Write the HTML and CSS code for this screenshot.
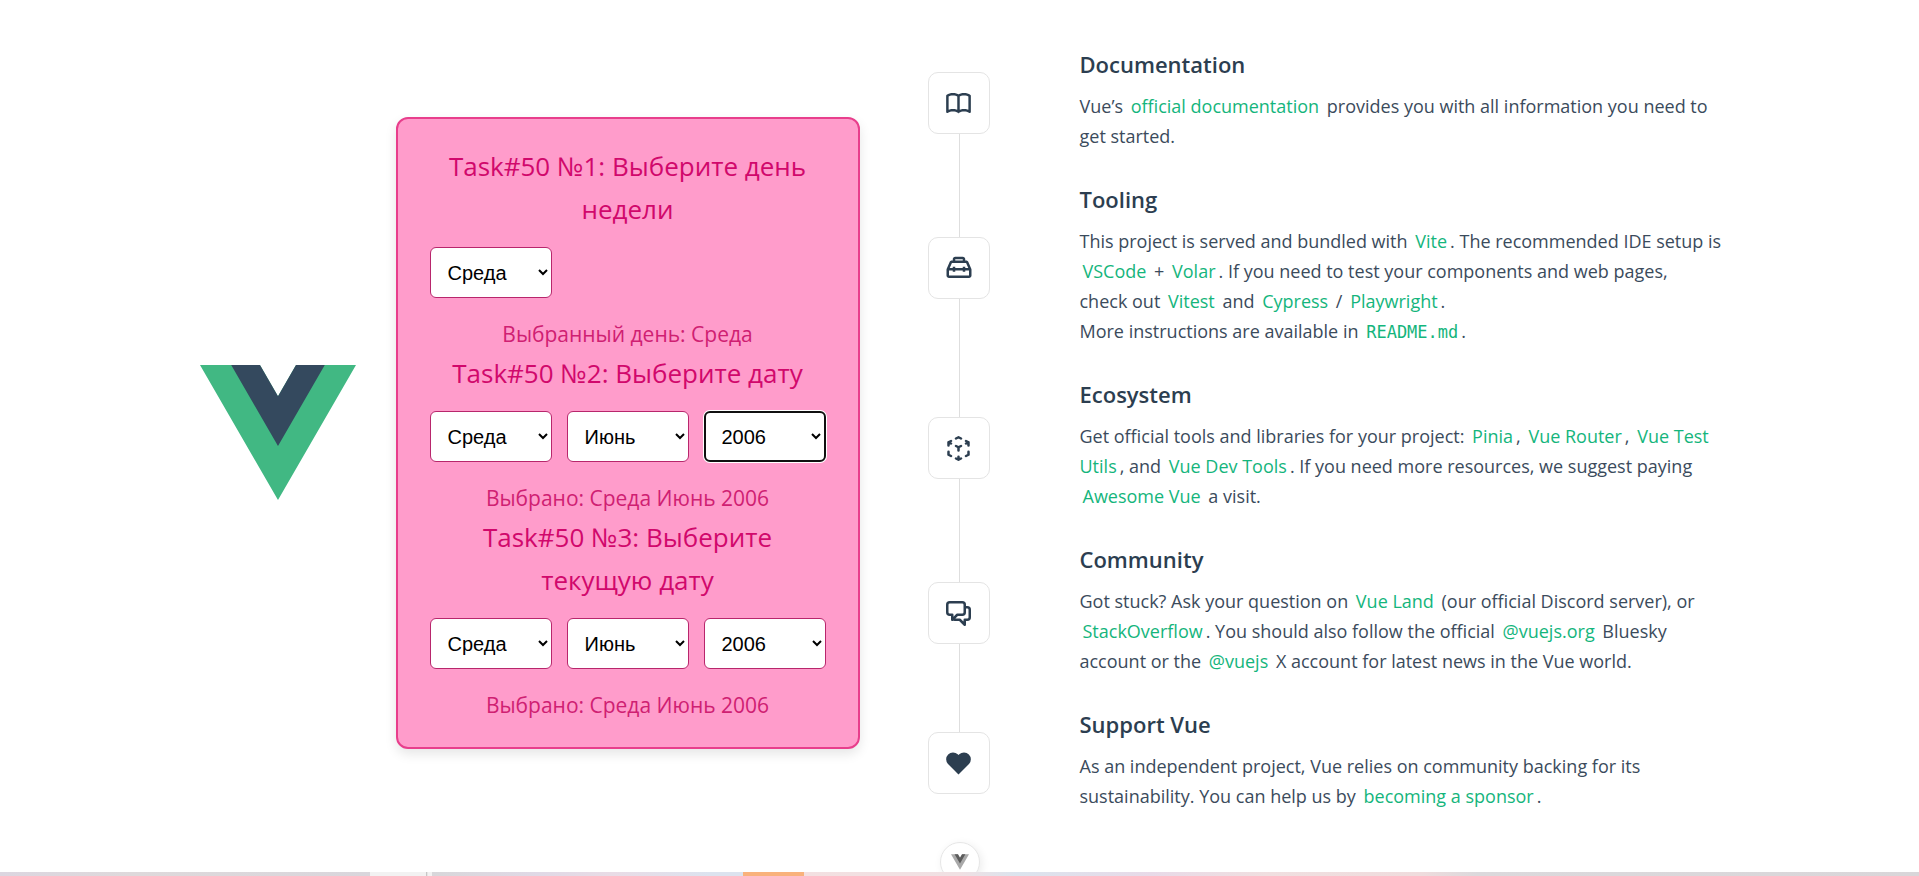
FILE: index.html
```html
<!DOCTYPE html>
<html lang="ru">
<head>
<meta charset="utf-8">
<meta name="viewport" content="width=device-width, initial-scale=1">
<title>Vue App</title>
<link rel="stylesheet" href="styles.css">
</head>
<body>
<div class="app">
  <header class="header">
    <svg class="logo" viewBox="0 0 261.76 226.69" role="img" aria-label="Vue logo">
      <path fill="#41b883" d="M161.096.001l-30.224 52.35L100.647.002H-.005L130.872 226.69 261.749 0z"/>
      <path fill="#34495e" d="M161.096.001l-30.224 52.35L100.647.002H52.346l78.526 136.01L209.398.001z"/>
    </svg>
    <div class="card">
      <h2 class="card-title">Task#50 №1: Выберите день недели</h2>
      <div class="selects">
        <select class="select" aria-label="День недели"><option>Среда</option></select>
      </div>
      <p class="result">Выбранный день: Среда</p>
      <h2 class="card-title">Task#50 №2: Выберите дату</h2>
      <div class="selects">
        <select class="select" aria-label="День"><option>Среда</option></select>
        <select class="select" aria-label="Месяц"><option>Июнь</option></select>
        <select class="select select-active" aria-label="Год"><option>2006</option></select>
      </div>
      <p class="result">Выбрано: Среда Июнь 2006</p>
      <h2 class="card-title">Task#50 №3: Выберите текущую дату</h2>
      <div class="selects">
        <select class="select" aria-label="Текущий день"><option>Среда</option></select>
        <select class="select" aria-label="Текущий месяц"><option>Июнь</option></select>
        <select class="select" aria-label="Текущий год"><option>2006</option></select>
      </div>
      <p class="result">Выбрано: Среда Июнь 2006</p>
    </div>
  </header>

  <main class="items" lang="en">
    <section class="item">
      <div class="rail"><span class="icon">
        <svg width="25" height="21" viewBox="0 0 20 17" fill="currentColor" aria-hidden="true"><path d="M11 2.253a1 1 0 1 0-2 0h2zm-2 13a1 1 0 1 0 2 0H9zm.447-12.167a1 1 0 1 0 1.107-1.666L9.447 3.086zM1 2.253L.447 1.42A1 1 0 0 0 0 2.253h1zm0 13H0a1 1 0 0 0 1.553.833L1 15.253zm8.447.833a1 1 0 1 0 1.107-1.666l-1.107 1.666zm0-14.666a1 1 0 1 0 1.107 1.666L9.447 1.42zM19 2.253h1a1 1 0 0 0-.447-.833L19 2.253zm0 13l-.553.833A1 1 0 0 0 20 15.253h-1zm-9.553-.833a1 1 0 1 0 1.107 1.666L9.447 14.42zM9 2.253v13h2v-13H9zm1.553-.833C9.203.523 7.42 0 5.5 0v2c1.572 0 2.961.431 3.947 1.086l1.107-1.666zM5.5 0C3.58 0 1.797.523.447 1.42l1.107 1.666C2.539 2.431 3.928 2 5.5 2V0zM0 2.253v13h2v-13H0zm1.553 13.833C2.539 15.431 3.928 15 5.5 15v-2c-1.92 0-3.703.523-5.053 1.42l1.107 1.666zM5.5 15c1.572 0 2.961.431 3.947 1.086l1.107-1.666C9.203 13.523 7.42 13 5.5 13v2zm5.053-11.914C11.539 2.431 12.928 2 14.5 2V0c-1.92 0-3.703.523-5.053 1.42l1.107 1.666zM14.5 2c1.573 0 2.961.431 3.947 1.086l1.107-1.666C18.203.523 16.421 0 14.5 0v2zm3.5.253v13h2v-13h-2zm1.553 12.167C18.203 13.523 16.421 13 14.5 13v2c1.573 0 2.961.431 3.947 1.086l1.107-1.666zM14.5 13c-1.92 0-3.703.523-5.053 1.42l1.107 1.666C11.539 15.431 12.928 15 14.5 15v-2z"/></svg>
      </span></div>
      <div class="details">
        <h3>Documentation</h3>
        <p>Vue’s <a href="#docs">official documentation</a> provides you with all information you need to get started.</p>
      </div>
    </section>

    <section class="item">
      <div class="rail"><span class="icon">
        <svg width="30" height="30" viewBox="0 0 24 24" fill="currentColor" aria-hidden="true"><path d="M20 18v-4h-3v1h-2v-1H9v1H7v-1H4v4h16M6.33 8l-1.74 4H7v-1h2v1h6v-1h2v1h2.41l-1.74-4H6.33M9 5v1h6V5H9m12.84 7.61c.1.22.16.48.16.8V18c0 .53-.21 1-.6 1.41-.4.4-.85.59-1.4.59H4c-.55 0-1-.19-1.4-.59C2.21 19 2 18.53 2 18v-4.59c0-.32.06-.58.16-.8L4.5 7.22C4.84 6.41 5.45 6 6.33 6H7V5c0-.55.18-1 .57-1.41C7.96 3.2 8.44 3 9 3h6c.56 0 1.04.2 1.43.59.39.41.57.86.57 1.41v1h.67c.88 0 1.49.41 1.83 1.22l2.34 5.39z"/></svg>
      </span></div>
      <div class="details">
        <h3>Tooling</h3>
        <p>This project is served and bundled with <a href="#vite">Vite</a>. The recommended IDE setup is <a href="#vscode">VSCode</a> + <a href="#volar">Volar</a>. If you need to test your components and web pages,<br>
        check out <a href="#vitest">Vitest</a> and <a href="#cypress">Cypress</a> / <a href="#playwright">Playwright</a>.<br>
        More instructions are available in <a href="#readme"><code>README.md</code></a>.</p>
      </div>
    </section>

    <section class="item">
      <div class="rail"><span class="icon">
        <svg width="23" height="25" viewBox="0 0 18 20" fill="currentColor" aria-hidden="true"><path d="M11.447 8.894a1 1 0 1 0-.894-1.789l.894 1.789zm-2.894-.789a1 1 0 1 0 .894 1.789l-.894-1.789zm0 1.789a1 1 0 1 0 .894-1.789l-.894 1.789zM7.447 7.106a1 1 0 1 0-.894 1.789l.894-1.789zM10 9a1 1 0 1 0-2 0h2zm-2 2.5a1 1 0 1 0 2 0H8zm9.447-5.606a1 1 0 1 0-.894-1.789l.894 1.789zm-2.894-.789a1 1 0 1 0 .894 1.789l-.894-1.789zm2 .789a1 1 0 1 0 .894-1.789l-.894 1.789zm-1.106-2.789a1 1 0 1 0-.894 1.789l.894-1.789zM18 5a1 1 0 1 0-2 0h2zm-2 2.5a1 1 0 1 0 2 0h-2zm-5.447-4.606a1 1 0 1 0 .894-1.789l-.894 1.789zM9 1l.447-.894a1 1 0 0 0-.894 0L9 1zm-2.447.106a1 1 0 1 0 .894 1.789l-.894-1.789zm-6 3a1 1 0 1 0 .894 1.789L.553 4.106zm2.894.789a1 1 0 1 0-.894-1.789l.894 1.789zm-2-.789a1 1 0 1 0-.894 1.789l.894-1.789zm1.106 2.789a1 1 0 1 0 .894-1.789l-.894 1.789zM2 5a1 1 0 1 0-2 0h2zM0 7.5a1 1 0 1 0 2 0H0zm8.553 12.394a1 1 0 1 0 .894-1.789l-.894 1.789zm-1.106-2.789a1 1 0 1 0-.894 1.789l.894-1.789zm1.106 1a1 1 0 1 0 .894 1.789l-.894-1.789zm2.894.789a1 1 0 1 0-.894-1.789l.894 1.789zM8 19a1 1 0 1 0 2 0H8zm2-2.5a1 1 0 1 0-2 0h2zm-7.447.394a1 1 0 1 0 .894-1.789l-.894 1.789zM1 15H0a1 1 0 0 0 .553.894L1 15zm1-2.5a1 1 0 1 0-2 0h2zm12.553 2.606a1 1 0 1 0 .894 1.789l-.894-1.789zM17 15l.447.894A1 1 0 0 0 18 15h-1zm1-2.5a1 1 0 1 0-2 0h2zm-7.447-5.394l-2 1 .894 1.789 2-1-.894-1.789zm-1.106 1l-2-1-.894 1.789 2 1 .894-1.789zM8 9v2.5h2V9H8zm8.553-4.894l-2 1 .894 1.789 2-1-.894-1.789zm.894 0l-2-1-.894 1.789 2 1 .894-1.789zM16 5v2.5h2V5h-2zm-4.553-3.894l-2-1-.894 1.789 2 1 .894-1.789zm-2.894-1l-2 1 .894 1.789 2-1L8.553.106zM1.447 5.894l2-1-.894-1.789-2 1 .894 1.789zm-.894 0l2 1 .894-1.789-2-1-.894 1.789zM0 5v2.5h2V5H0zm9.447 13.106l-2-1-.894 1.789 2 1 .894-1.789zm0 1.789l2-1-.894-1.789-2 1 .894 1.789zM10 19v-2.5H8V19h2zm-6.553-3.894l-2-1-.894 1.789 2 1 .894-1.789zM2 15v-2.5H0V15h2zm13.447 1.894l2-1-.894-1.789-2 1 .894 1.789zM18 15v-2.5h-2V15h2z"/></svg>
      </span></div>
      <div class="details">
        <h3>Ecosystem</h3>
        <p>Get official tools and libraries for your project: <a href="#pinia">Pinia</a>, <a href="#router">Vue Router</a>, <a href="#test-utils">Vue Test Utils</a>, and <a href="#devtools">Vue Dev Tools</a>. If you need more resources, we suggest paying <a href="#awesome">Awesome Vue</a> a visit.</p>
      </div>
    </section>

    <section class="item">
      <div class="rail"><span class="icon">
        <svg width="25" height="25" viewBox="0 0 20 20" fill="currentColor" aria-hidden="true"><path d="M15 4a1 1 0 1 0 0 2V4zm0 11v-1a1 1 0 0 0-1 1h1zm0 4l-.707.707A1 1 0 0 0 16 19h-1zm-4-4l.707-.707A1 1 0 0 0 11 14v1zm-4.707-1.293a1 1 0 0 0-1.414 1.414l1.414-1.414zm-.707.707l-.707-.707.707.707zM9 11v-1a1 1 0 0 0-.707.293L9 11zm-4 0h1a1 1 0 0 0-1-1v1zm0 4H4a1 1 0 0 0 1.707.707L5 15zm10-9h2V4h-2v2zm2 0a1 1 0 0 1 1 1h2a3 3 0 0 0-3-3v2zm1 1v6h2V7h-2zm0 6a1 1 0 0 1-1 1v2a3 3 0 0 0 3-3h-2zm-1 1h-2v2h2v-2zm-3 1v4h2v-4h-2zm1.707 3.293l-4-4-1.414 1.414 4 4 1.414-1.414zM11 14H7v2h4v-2zm-4 0c-.276 0-.525-.111-.707-.293l-1.414 1.414C5.42 15.663 6.172 16 7 16v-2zm-.707 1.121l3.414-3.414-1.414-1.414-3.414 3.414 1.414 1.414zM9 12h4v-2H9v2zm4 0a3 3 0 0 0 3-3h-2a1 1 0 0 1-1 1v2zm3-3V3h-2v6h2zm0-6a3 3 0 0 0-3-3v2a1 1 0 0 1 1 1h2zm-3-3H3v2h10V0zM3 0a3 3 0 0 0-3 3h2a1 1 0 0 1 1-1V0zM0 3v6h2V3H0zm0 6a3 3 0 0 0 3 3v-2a1 1 0 0 1-1-1H0zm3 3h2v-2H3v2zm1-1v4h2v-4H4zm1.707 4.707l.586-.586-1.414-1.414-.586.586 1.414 1.414z"/></svg>
      </span></div>
      <div class="details">
        <h3>Community</h3>
        <p>Got stuck? Ask your question on <a href="#land">Vue Land</a> (our official Discord server), or <a href="#stackoverflow">StackOverflow</a>. You should also follow the official <a href="#bluesky">@vuejs.org</a> Bluesky account or the <a href="#x">@vuejs</a> X account for latest news in the Vue world.</p>
      </div>
    </section>

    <section class="item">
      <div class="rail"><span class="icon">
        <svg width="25" height="25" viewBox="0 0 20 20" fill="currentColor" aria-hidden="true"><path d="M10 3.22l-.61-.6a5.5 5.5 0 0 0-7.666.105 5.5 5.5 0 0 0-.114 7.665L10 18.78l8.39-8.4a5.5 5.5 0 0 0-.114-7.665 5.5 5.5 0 0 0-7.666-.105l-.61.61z"/></svg>
      </span></div>
      <div class="details">
        <h3>Support Vue</h3>
        <p>As an independent project, Vue relies on community backing for its sustainability. You can help us by <a href="#sponsor">becoming a sponsor</a>.</p>
      </div>
    </section>
  </main>
</div>

<button class="devtools" type="button" aria-label="Toggle Vue DevTools">
  <svg width="18" height="16" viewBox="0 0 262 227" aria-hidden="true">
    <path fill="#a9a9a9" d="M161 0l-30 52L101 0H0l131 227L262 0z"/>
    <path fill="#5c5c5c" d="M161 0l-30 52L101 0H52l79 136L209 0z"/>
  </svg>
</button>
<div class="strip"></div>
</body>
</html>
```

FILE: styles.css
```css
*,
*::before,
*::after {
  box-sizing: border-box;
  margin: 0;
}

body {
  display: flex;
  flex-direction: column;
  min-height: 100vh;
  background: #fff;
  color: #2c3e50;
  font-family: "Open Sans", "Noto Sans", sans-serif;
  font-size: 18px;
  line-height: 30px;
}

.app {
  flex: 1;
  display: grid;
  grid-template-columns: 1fr 1fr;
  align-items: center;
  width: 100%;
  max-width: 1600px;
  margin: 0 auto;
  padding: 0 40px 6px;
}

.header {
  display: flex;
  align-items: center;
  gap: 40px;
  padding-right: 80px;
}

.logo {
  flex: none;
  width: 156px;
}

.card {
  width: 100%;
  max-width: 464px;
  padding: 26px 32px 24px;
  border: 2px solid #e83e8c;
  border-radius: 12px;
  background: #ff9ccb;
  box-shadow: 0 5px 12px rgba(0, 0, 0, 0.1);
  text-align: center;
}

.card-title {
  margin-bottom: 16px;
  color: #d1086c;
  font-size: 26px;
  font-weight: 400;
  line-height: 43px;
}

.selects {
  display: grid;
  grid-template-columns: repeat(3, 1fr);
  gap: 15px;
}

.select {
  height: 51px;
  padding: 0 2px 0 13px;
  border: 1px solid #b8266c;
  border-radius: 6px;
  background-color: #fff;
  color: #000;
  font-family: "Liberation Sans", Arial, sans-serif;
  font-size: 20px;
}

.select-active {
  border: 2px solid #101010;
  padding-left: 12px;
  box-shadow: 0 0 0 1px #fff;
}

.result {
  margin-top: 19px;
  color: #cf2072;
  font-size: 21px;
  line-height: 35px;
}

.items {
  margin: 0 -10px 0 -32px;
}

.item {
  display: flex;
  gap: 88px;
}

.rail {
  flex: none;
  display: flex;
  flex-direction: column;
  align-items: center;
  width: 64px;
}

.rail::before,
.rail::after {
  content: "";
  flex: 1;
  width: 1px;
  background: #dedede;
}

.item:first-child .rail::before,
.item:last-child .rail::after {
  background: none;
}

.icon {
  display: flex;
  align-items: center;
  align-self: flex-start;
  justify-content: center;
  width: 62px;
  height: 62px;
  border: 1px solid #e4e4e4;
  border-radius: 10px;
}

.details {
  flex: 1;
  padding: 9px 0 20px;
}

.details h3 {
  margin-bottom: 8px;
  font-size: 22px;
  font-weight: 600;
  line-height: 38px;
}

.details p {
  color: #3b4b5c;
}

.details a {
  padding: 0 3px;
  color: #14b57c;
  text-decoration: none;
}

.details code {
  font-family: "DejaVu Sans Mono", monospace;
  font-size: 17px;
  line-height: 1;
}

.devtools {
  position: fixed;
  bottom: -6px;
  left: 50%;
  display: flex;
  align-items: center;
  justify-content: center;
  width: 40px;
  height: 40px;
  margin-left: -20px;
  padding: 0;
  border: 1px solid #e6e6e6;
  border-radius: 50%;
  background: #fff;
  box-shadow: 2px 2px 8px rgba(0, 0, 0, 0.08);
}

.strip {
  position: relative;
  height: 4px;
  background: linear-gradient(
    to right,
    #dcd6e0 0%,
    #ded9db 7%,
    #d9d6dc 19.3%,
    #f2f2f2 19.3%,
    #f2f2f2 22.2%,
    #b8b8b8 22.2%,
    #f2f2f2 22.3%,
    #f2f2f2 22.5%,
    #d8d7da 22.5%,
    #e0d9e6 28%,
    #e9dce6 32%,
    #dce3ef 37%,
    #dce3ef 38.7%,
    #f9b27c 38.7%,
    #f9b27c 41.9%,
    #f3e0e1 41.9%,
    #f0e0e3 50%,
    #dbe4ee 53%,
    #e8dae8 60%,
    #f0dfe0 66%,
    #efdcdd 74%,
    #dbd9dc 77%,
    #d9d6d9 100%
  );
}
```
